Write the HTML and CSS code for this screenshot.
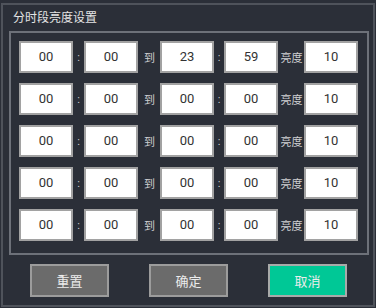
FILE: index.html
```html
<html>
	<head>
		<link rel="stylesheet" href="styles.css">
	</head>
	<body>
		<div class="dialog">
			<h1>分时段亮度设置</h1>
			<div class="panel">
				<div class="row">
					<div class="box">00</div><span class="sep">:</span><div class="box">00</div><span class="lbl">到</span>
					<div class="box">23</div><span class="sep">:</span><div class="box">59</div><span class="lbl">亮度</span><div class="box">10</div>
				</div>
				<div class="row">
					<div class="box">00</div><span class="sep">:</span><div class="box">00</div><span class="lbl">到</span>
					<div class="box">00</div><span class="sep">:</span><div class="box">00</div><span class="lbl">亮度</span><div class="box">10</div>
				</div>
				<div class="row">
					<div class="box">00</div><span class="sep">:</span><div class="box">00</div><span class="lbl">到</span>
					<div class="box">00</div><span class="sep">:</span><div class="box">00</div><span class="lbl">亮度</span><div class="box">10</div>
				</div>
				<div class="row">
					<div class="box">00</div><span class="sep">:</span><div class="box">00</div><span class="lbl">到</span>
					<div class="box">00</div><span class="sep">:</span><div class="box">00</div><span class="lbl">亮度</span><div class="box">10</div>
				</div>
				<div class="row">
					<div class="box">00</div><span class="sep">:</span><div class="box">00</div><span class="lbl">到</span>
					<div class="box">00</div><span class="sep">:</span><div class="box">00</div><span class="lbl">亮度</span><div class="box">10</div>
				</div>
			</div>
			<div class="buttons">
				<button>重置</button>
				<button>确定</button>
				<button class="ok">取消</button>
			</div>
		</div>
	</body>
</html>
```

FILE: styles.css
```css
body {
	background-color: #2b2f38;
	margin: 0;
	font-family: Roboto, "Noto Sans CJK SC", sans-serif;
}
.dialog {
	box-sizing: border-box;
	width: 374px;
	height: 304px;
	margin: 3px 0 0 1px;
	border: 2px solid #4f535b;
}
h1 {
	margin: 0;
	padding: 0 0 0 10px;
	height: 26px;
	line-height: 26px;
	font-size: 12px;
	font-weight: normal;
	color: #e4e4e4;
}
.panel {
	box-sizing: border-box;
	width: 360px;
	margin-left: 6px;
	border: 2px solid #6d7179;
	padding: 8px 0 12px 8px;
	display: flex;
	flex-direction: column;
	gap: 10px;
}
.row {
	display: grid;
	grid-template-columns: 54px 11px 54px 22px 54px 10px 54px 26px 54px;
	height: 32px;
	align-items: center;
}
.box {
	box-sizing: border-box;
	height: 32px;
	background: #fff;
	border: 2px solid #a2a2a2;
	color: #333;
	font-size: 13px;
	line-height: 28px;
	text-align: center;
}
.sep, .lbl {
	text-align: center;
	color: #cfd0d2;
	font-size: 11px;
}
.lbl { padding-left: 1px; }
.buttons {
	display: flex;
	gap: 40px;
	padding: 9px 0 0 27px;
}
button {
	box-sizing: border-box;
	width: 79px;
	height: 33px;
	border: 2px solid #9c9c9c;
	background-color: #6b6b6b;
	color: #ececec;
	font-family: inherit;
	font-size: 13px;
	padding: 0;
}
button.ok {
	background-color: #00c896;
	border-color: #a8aaa9;
}
```
